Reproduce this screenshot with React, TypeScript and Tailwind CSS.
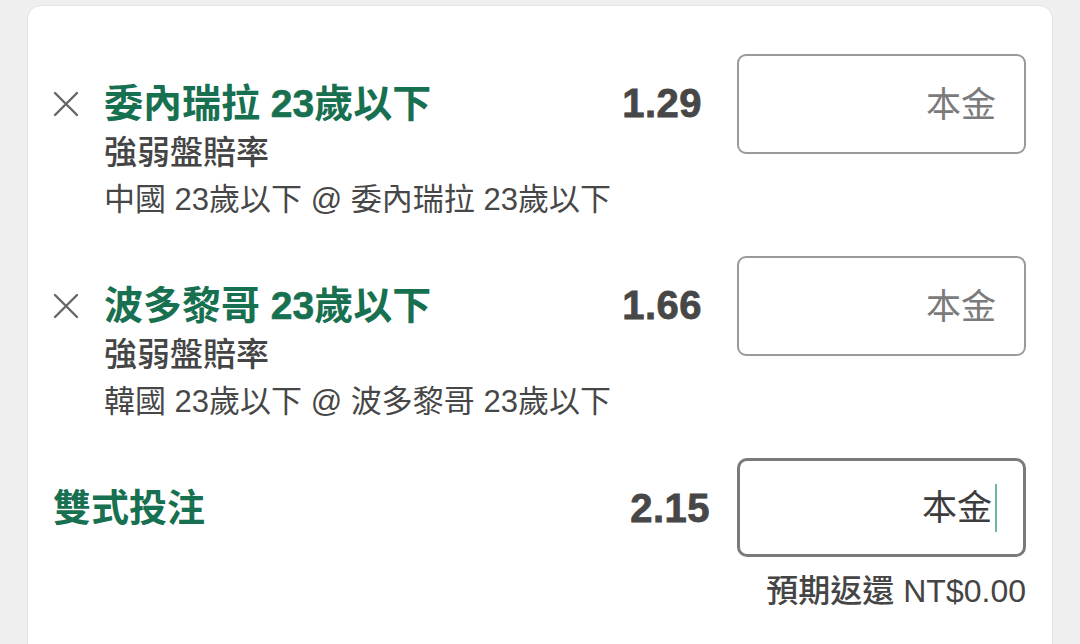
import React from "react";

const FONT = { fontFamily: '"Liberation Sans", "Noto Sans CJK TC", sans-serif' };

function XIcon() {
  return (
    <svg width="26" height="26" viewBox="0 0 26 26" className="block">
      <path d="M2 2 L24 24 M24 2 L2 24" stroke="#666" strokeWidth="2.4" strokeLinecap="round" />
    </svg>
  );
}

function StakeBox({ focused = false }: { focused?: boolean }) {
  return (
    <div
      className={
        focused
          ? "w-[289px] h-[99px] shrink-0 rounded-[10px] border-[3px] border-[#7a7a7a] flex items-center justify-end pr-[26px]"
          : "w-[289px] h-[100px] shrink-0 rounded-[9px] border-2 border-[#9a9a9a] flex items-center justify-end pr-[28px]"
      }
    >
      <span className={focused ? "text-[35px] leading-none text-[#3c3c3c]" : "text-[35px] leading-none text-[#7b7b7b]"}>本金</span>
      {focused && <span className="ml-[3px] w-[2px] h-[48px] bg-[#6db8a0]" />}
    </div>
  );
}

function Selection({ team, odds, match }: { team: string; odds: string; match: string }) {
  return (
    <div className="flex">
      <div className="flex-1 pt-[24px] pr-[35px]">
        <div className="flex items-center h-[50px]">
          <div className="w-[51px] flex items-center pt-[2px]">
            <XIcon />
          </div>
          <div className="text-[39px] font-bold text-[#17704f] leading-none whitespace-nowrap">
            {team} <span className="[-webkit-text-stroke:0.6px_#17704f]">23</span>歲以下
          </div>
          <div className="flex-1" />
          <div className="text-[40px] font-bold text-[#474747] leading-none tracking-[0.5px] [-webkit-text-stroke:0.8px_#474747]">{odds}</div>
        </div>
        <div className="pl-[51px] h-[48px] flex items-center text-[33px] font-medium text-[#454545] leading-none">
          強弱盤賠率
        </div>
        <div className="pl-[51px] h-[46px] flex items-center text-[31px] text-[#474747] leading-none whitespace-nowrap">
          {match}
        </div>
      </div>
      <StakeBox />
    </div>
  );
}

export default function App() {
  return (
    <div className="w-[1080px] h-[644px] bg-[#efefef] overflow-hidden pt-[5px] px-[27px]" style={FONT}>
      <div className="bg-white h-[700px] rounded-t-[14px] border border-[#e3e3e3] pt-[48px] pl-[25px] pr-[26px]">
        <Selection team="委內瑞拉" odds="1.29" match="中國 23歲以下 @ 委內瑞拉 23歲以下" />
        <div className="h-[34px]" />
        <Selection team="波多黎哥" odds="1.66" match="韓國 23歲以下 @ 波多黎哥 23歲以下" />
        <div className="h-[34px]" />
        <div className="flex items-center">
          <div className="text-[38px] font-bold text-[#17704f] leading-none">雙式投注</div>
          <div className="flex-1" />
          <div className="text-[40px] font-bold text-[#474747] leading-none tracking-[0.5px] mr-[27px] [-webkit-text-stroke:0.8px_#474747]">2.15</div>
          <StakeBox focused />
        </div>
        <div className="flex justify-end mt-[16px] h-[36px] items-center text-[32px] font-medium text-[#454545] leading-none">
          預期返還 NT$0.00
        </div>
      </div>
    </div>
  );
}
